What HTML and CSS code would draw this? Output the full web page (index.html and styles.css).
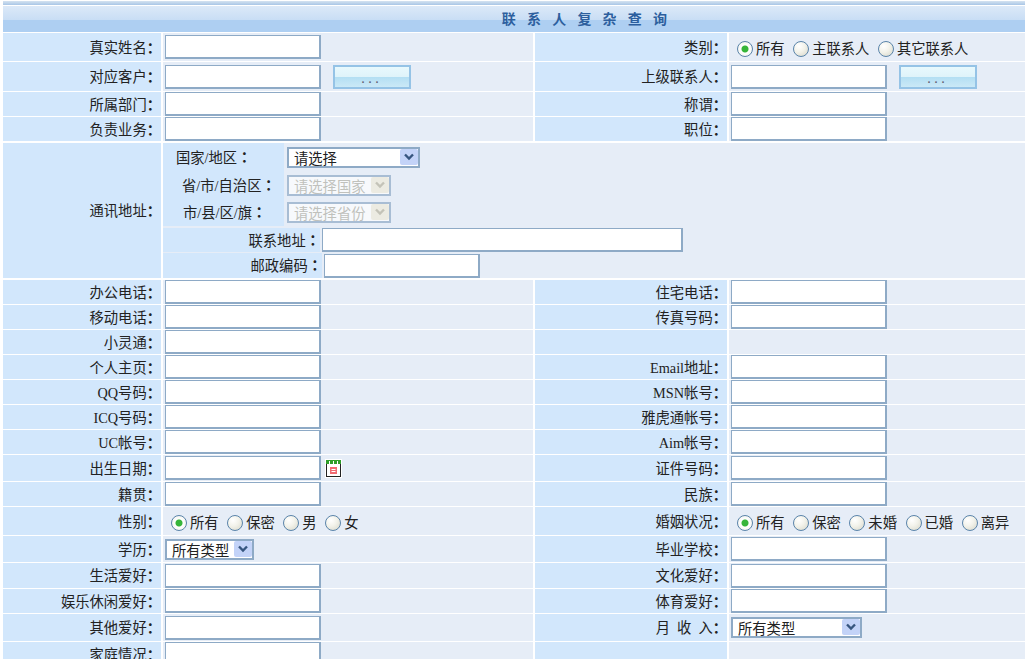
FILE: index.html
```html
<!DOCTYPE html>
<html lang="zh-CN">
<head>
<meta charset="UTF-8">
<title>联系人复杂查询</title>
<link rel="stylesheet" href="styles.css">
</head>
<body>
<div class="topline"></div>
<table class="form">
    <colgroup>
        <col class="col-label"><col class="col-value"><col class="col-label-r"><col class="col-value-r">
    </colgroup>
    <tr class="title-row"><td colspan="4" class="title">联系人复杂查询</td></tr>
    <tr class="h28">
        <th>真实姓名<i>：</i></th><td><input type="text"></td>
        <th>类别<i>：</i></th>
        <td class="radios">
            <label><input type="radio" name="kind" checked>所有</label>
            <label><input type="radio" name="kind">主联系人</label>
            <label><input type="radio" name="kind">其它联系人</label>
        </td>
    </tr>
    <tr class="h29">
        <th>对应客户<i>：</i></th><td><input type="text"><button class="pick">...</button></td>
        <th>上级联系人<i>：</i></th><td><input type="text"><button class="pick">...</button></td>
    </tr>
    <tr><th>所属部门<i>：</i></th><td><input type="text"></td><th>称谓<i>：</i></th><td><input type="text"></td></tr>
    <tr><th>负责业务<i>：</i></th><td><input type="text"></td><th>职位<i>：</i></th><td><input type="text"></td></tr>
    <tr class="addr-tr">
        <th>通讯地址<i>：</i></th>
        <td colspan="3" class="addr">
            <div class="addr-row area">
                <span class="area-label pad13">国家/地区<i>：</i></span>
                <span class="sel sel-wide"><select><option>请选择</option></select>
                    <svg viewBox="0 0 18 16"><rect width="18" height="16" rx="2" fill="#c3d3f8"/><path d="M5 5.5l4 4 4-4" fill="none" stroke="#36557f" stroke-width="2.4"/></svg></span>
            </div>
            <div class="addr-row area a26">
                <span class="area-label pad19">省/市/自治区<i>：</i></span>
                <span class="sel sel-off"><select disabled><option>请选择国家</option></select>
                    <svg viewBox="0 0 18 16"><rect width="18" height="16" rx="2" fill="#ecebe2"/><path d="M5 5.5l4 4 4-4" fill="none" stroke="#c4c3b8" stroke-width="2.4"/></svg></span>
            </div>
            <div class="addr-row area a28">
                <span class="area-label pad20">市/县/区/旗<i>：</i></span>
                <span class="sel sel-off"><select disabled><option>请选择省份</option></select>
                    <svg viewBox="0 0 18 16"><rect width="18" height="16" rx="2" fill="#ecebe2"/><path d="M5 5.5l4 4 4-4" fill="none" stroke="#c4c3b8" stroke-width="2.4"/></svg></span>
            </div>
            <div class="addr-row line first">
                <span class="line-label w157">联系地址<i>：</i></span><input class="wide" type="text">
            </div>
            <div class="addr-row line">
                <span class="line-label w159">邮政编码<i>：</i></span><input type="text">
            </div>
        </td>
    </tr>
    <tr><th>办公电话<i>：</i></th><td><input type="text"></td><th>住宅电话<i>：</i></th><td><input type="text"></td></tr>
    <tr><th>移动电话<i>：</i></th><td><input type="text"></td><th>传真号码<i>：</i></th><td><input type="text"></td></tr>
    <tr><th>小灵通<i>：</i></th><td><input type="text"></td><th></th><td></td></tr>
    <tr><th>个人主页<i>：</i></th><td><input type="text"></td><th>Email地址<i>：</i></th><td><input type="text"></td></tr>
    <tr><th>QQ号码<i>：</i></th><td><input type="text"></td><th>MSN帐号<i>：</i></th><td><input type="text"></td></tr>
    <tr><th>ICQ号码<i>：</i></th><td><input type="text"></td><th>雅虎通帐号<i>：</i></th><td><input type="text"></td></tr>
    <tr><th>UC帐号<i>：</i></th><td><input type="text"></td><th>Aim帐号<i>：</i></th><td><input type="text"></td></tr>
    <tr class="h26">
        <th>出生日期<i>：</i></th>
        <td><input type="text">
            <svg class="cal" viewBox="0 0 17 19">
                <rect width="17" height="19" fill="#fff"/>
                <rect x="1.5" y="1.5" width="14" height="16" fill="#fff" stroke="#222"/>
                <rect x="1" y="1" width="15" height="4" fill="#2f9e2a"/>
                <path d="M4.5 2v3M8.5 2v3M12.5 2v3" stroke="#fff"/>
                <rect x="5" y="8" width="7" height="7" fill="#f06a72"/>
                <path d="M6.5 10.5h4M6.5 12.5h4" stroke="#fff"/>
            </svg>
        </td>
        <th>证件号码<i>：</i></th><td><input type="text"></td>
    </tr>
    <tr><th>籍贯<i>：</i></th><td><input type="text"></td><th>民族<i>：</i></th><td><input type="text"></td></tr>
    <tr class="h28">
        <th>性别<i>：</i></th>
        <td class="radios">
            <label><input type="radio" name="sex" checked>所有</label>
            <label><input type="radio" name="sex">保密</label>
            <label><input type="radio" name="sex">男</label>
            <label><input type="radio" name="sex">女</label>
        </td>
        <th>婚姻状况<i>：</i></th>
        <td class="radios">
            <label><input type="radio" name="marry" checked>所有</label>
            <label><input type="radio" name="marry">保密</label>
            <label><input type="radio" name="marry">未婚</label>
            <label><input type="radio" name="marry">已婚</label>
            <label><input type="radio" name="marry">离异</label>
        </td>
    </tr>
    <tr class="h26">
        <th>学历<i>：</i></th>
        <td><span class="sel sel-edu"><select><option>所有类型</option></select>
            <svg viewBox="0 0 18 16"><rect width="18" height="16" rx="2" fill="#c3d3f8"/><path d="M5 5.5l4 4 4-4" fill="none" stroke="#36557f" stroke-width="2.4"/></svg></span></td>
        <th>毕业学校<i>：</i></th><td><input type="text"></td>
    </tr>
    <tr class="h25"><th>生活爱好<i>：</i></th><td><input type="text"></td><th>文化爱好<i>：</i></th><td><input type="text"></td></tr>
    <tr><th>娱乐休闲爱好<i>：</i></th><td><input type="text"></td><th>体育爱好<i>：</i></th><td><input type="text"></td></tr>
    <tr class="h27">
        <th>其他爱好<i>：</i></th><td><input type="text"></td>
        <th class="spaced">月 收 入<i>：</i></th>
        <td><span class="sel sel-income"><select><option>所有类型</option></select>
            <svg viewBox="0 0 18 16"><rect width="18" height="16" rx="2" fill="#c3d3f8"/><path d="M5 5.5l4 4 4-4" fill="none" stroke="#36557f" stroke-width="2.4"/></svg></span></td>
    </tr>
    <tr><th>家庭情况<i>：</i></th><td class="top"><input type="text"></td><th></th><td></td></tr>
</table>
</body>
</html>
```

FILE: styles.css
```css
html, body {
    margin: 0;
    padding: 0;
    height: 659px;
    overflow: hidden;
    background-color: #fff;
}

body {
    font-family: "Liberation Serif", "Noto Sans CJK SC", sans-serif;
    font-size: 14.3px;
    color: #222;
}

.topline {
    height: 4px;
    margin: 1px 0 0 3px;
    background: linear-gradient(#d5e3f1, #a9c6e6);
}

.form {
    table-layout: fixed;
    width: 1026px;
    border-collapse: separate;
    border-spacing: 2px 1px;
    margin: 0 0 0 1px;
}

.col-label { width: 158px; }
.col-value { width: 370px; }
.col-label-r { width: 192px; }
.col-value-r { width: 296px; }

tr { height: 24px; }
.h25 { height: 25px; }
.h26 { height: 26px; }
.h27 { height: 27px; }
.h28 { height: 28px; }
.h29 { height: 29px; }

th, td {
    padding: 0;
    white-space: nowrap;
}

th {
    padding-bottom: 2px;
    background-color: #d2e7fc;
    font-weight: normal;
    text-align: right;
}

.spaced { word-spacing: 3.5px; }

td {
    background-color: #e6edf7;
    padding-left: 2px;
}

/* the colon sits centred in its box, the SC font pushes it left */
i {
    font-family: "Noto Sans CJK TC", sans-serif;
    font-style: normal;
    font-weight: bold;
}

.title-row { height: 26px; }

.title {
    padding: 0 0 2px 152px;
    background: linear-gradient(#dce9f8, #c9def5 52%, #aecff2 53%);
    color: #2d5f9e;
    font-size: 14px;
    font-weight: bold;
    letter-spacing: 11.2px;
    text-align: center;
}

input[type="text"] {
    box-sizing: border-box;
    width: 156px;
    height: 24px;
    margin: 0;
    padding: 0 2px;
    border: 1px solid #8eaac6;
    border-width: 1px 2px 2px 1px;
    background-color: #fff;
    vertical-align: middle;
}

.top { vertical-align: top; }

.pick {
    box-sizing: border-box;
    width: 78px;
    height: 24px;
    margin-left: 12px;
    padding: 5px 0 0 0;
    border: 2px solid #95c3e6;
    background: linear-gradient(#e8f9fd, #dff3fa 48%, #b4dff3 52%, #cbe9f7);
    color: #667;
    font-family: "Liberation Sans", sans-serif;
    font-size: 11px;
    font-weight: bold;
    letter-spacing: 4px;
    vertical-align: middle;
}

.radios {
    padding-left: 8px;
}

.radios label {
    margin-right: 5px;
}

input[type="radio"] {
    appearance: none;
    box-sizing: border-box;
    width: 16px;
    height: 16px;
    margin: 0 3px 0 0;
    border: 1px solid #5a84aa;
    border-radius: 50%;
    background: radial-gradient(circle at 35% 30%, #fff, #f2f2ea 45%, #d5d5c8);
    vertical-align: -3px;
}

input[type="radio"]:checked {
    background: radial-gradient(circle, #37b53a 0, #37b53a 3px, #fff 4px, #eeeee6);
}

.addr-tr th, .addr-tr td {
    border-top: 1px solid #fff;
    border-bottom: 1px solid #fff;
}

.addr {
    padding: 0;
    background-color: #e6edf7;
}

.addr-row {
    display: flex;
    align-items: center;
}

.area { height: 29px; }
.a26 { height: 26px; }
.a28 { height: 28px; }

.area-label {
    box-sizing: border-box;
    align-self: stretch;
    display: flex;
    align-items: center;
    width: 121px;
    margin-right: 3px;
    padding-bottom: 2px;
    background-color: #d2e7fc;
}

.pad13 { padding-left: 13px; }
.pad19 { padding-left: 19px; }
.pad20 { padding-left: 20px; }

.line {
    height: 25px;
}

.line.first {
    height: 24px;
    margin-top: 2px;
    margin-bottom: 1px;
}

.line-label {
    align-self: stretch;
    display: flex;
    align-items: center;
    justify-content: flex-end;
    margin-right: 2px;
    padding-bottom: 2px;
    background-color: #d2e7fc;
}

.w157 { width: 157px; }
.w159 { width: 159px; }

.line .wide { width: 361px; }

.sel {
    position: relative;
    display: inline-block;
    vertical-align: middle;
}

.sel select {
    appearance: none;
    display: block;
    box-sizing: border-box;
    width: 100%;
    height: 21px;
    padding: 2px 0 0 5px;
    border: 2px solid #8eaac6;
    border-radius: 0;
    background-color: #fff;
    color: #222;
    font-family: inherit;
    font-size: 14.3px;
}

.sel svg {
    position: absolute;
    top: 2px;
    right: 2px;
    width: 18px;
    height: 16px;
    pointer-events: none;
}

.sel-wide { width: 133px; }
.sel-off { width: 104px; }
.sel-edu { width: 89px; }
.sel-income { width: 131px; }

.sel-off select {
    background-color: #fff;
    color: #b0afa4;
}

.cal {
    width: 17px;
    height: 19px;
    vertical-align: middle;
}
```
